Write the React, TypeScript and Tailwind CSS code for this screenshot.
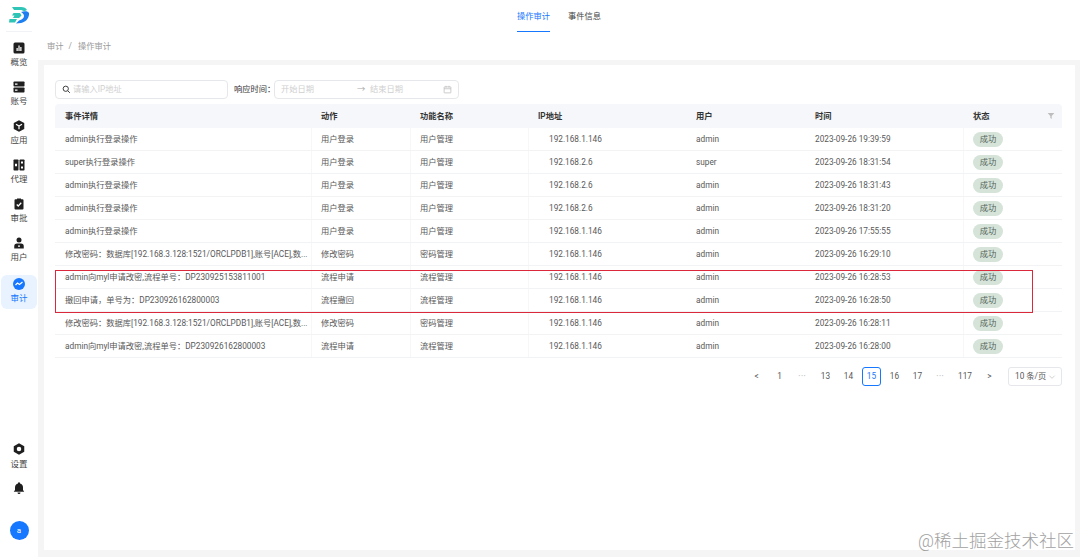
import React from 'react';

const font = { fontFamily: 'Roboto, "Noto Sans CJK SC", sans-serif' };

const logs = [
  ['admin执行登录操作', '用户登录', '用户管理', '192.168.1.146', 'admin', '2023-09-26 19:39:59'],
  ['super执行登录操作', '用户登录', '用户管理', '192.168.2.6', 'super', '2023-09-26 18:31:54'],
  ['admin执行登录操作', '用户登录', '用户管理', '192.168.2.6', 'admin', '2023-09-26 18:31:43'],
  ['admin执行登录操作', '用户登录', '用户管理', '192.168.2.6', 'admin', '2023-09-26 18:31:20'],
  ['admin执行登录操作', '用户登录', '用户管理', '192.168.1.146', 'admin', '2023-09-26 17:55:55'],
  ['修改密码：数据库[192.168.3.128:1521/ORCLPDB1],账号[ACE],数...', '修改密码', '密码管理', '192.168.1.146', 'admin', '2023-09-26 16:29:10'],
  ['admin向myl申请改密,流程单号：DP230925153811001', '流程申请', '流程管理', '192.168.1.146', 'admin', '2023-09-26 16:28:53'],
  ['撤回申请，单号为：DP230926162800003', '流程撤回', '流程管理', '192.168.1.146', 'admin', '2023-09-26 16:28:50'],
  ['修改密码：数据库[192.168.3.128:1521/ORCLPDB1],账号[ACE],数...', '修改密码', '密码管理', '192.168.1.146', 'admin', '2023-09-26 16:28:11'],
  ['admin向myl申请改密,流程单号：DP230926162800003', '流程申请', '流程管理', '192.168.1.146', 'admin', '2023-09-26 16:28:00'],
];

const navTop = [
  {
    label: '概览',
    icon: (
      <>
        <rect x="1" y="1" width="22" height="22" rx="3" />
        <path d="M7 12h2.500v6H7zM10.800 7h2.500v11h-2.500zM14.500 10H17v8h-2.500z" fill="#fff" />
      </>
    ),
  },
  {
    label: '账号',
    icon: (
      <>
        <rect x="1" y="1" width="22" height="10" rx="1.500" />
        <rect x="1" y="13" width="22" height="10" rx="1.500" />
        <path d="M4 5h5v2.500H4zM4 17h5v2.500H4z" fill="#fff" />
      </>
    ),
  },
  {
    label: '应用',
    icon: (
      <>
        <path d="M12 0.500l10.500 5.500v12L12 23.500 1.500 18V6z" />
        <path d="M6 8.500l6 3.500 6-3.500M12 12v6.500" fill="none" stroke="#fff" strokeWidth="2.500" />
      </>
    ),
  },
  {
    label: '代理',
    icon: (
      <>
        <rect x="1" y="1" width="10" height="22" rx="1.500" />
        <rect x="13" y="1" width="10" height="22" rx="1.500" />
        <path d="M4 9.500h4v5H4zM16 5h4v4h-4zM16 15h4v4h-4z" fill="#fff" />
      </>
    ),
  },
  {
    label: '审批',
    icon: (
      <>
        <path d="M5 2.500h3V1h8v1.500h3a2 2 0 012 2V21a2 2 0 01-2 2H5a2 2 0 01-2-2V4.500a2 2 0 012-2z" />
        <path d="M7.500 13l3 3 6-6.500" fill="none" stroke="#fff" strokeWidth="2.500" />
      </>
    ),
  },
  {
    label: '用户',
    icon: (
      <>
        <circle cx="12" cy="6" r="5" />
        <path d="M2.500 23v-4.500A5.500 5.500 0 018 13h8a5.500 5.500 0 015.500 5.500V23z" />
        <path d="M10 17h4v2.500h-4z" fill="#fff" />
      </>
    ),
  },
];

const columns = 'grid grid-cols-[256px_99px_118px_158px_119px_158px_99px]';

function NavIcon({ children }: { children: React.ReactNode }) {
  return (
    <svg viewBox="0 0 24 24" fill="#1f1f1f" className="w-[12px] h-[12px] shrink-0">
      {children}
    </svg>
  );
}

function Sidebar() {
  return (
    <aside className="w-[38px] shrink-0 bg-white flex flex-col items-center h-full">
      <div className="h-[32px] w-[26px] flex items-start justify-center border-b border-[#f0f2f5] pt-[6px]">
        <svg viewBox="0 0 20 18" className="w-[20px] h-[18px]">
          <path d="M3 1h9c3 0 5 1 6 3l-3 1.500C14 4.500 13 4 11 4H5z" fill="#2ec4b6" />
          <path d="M4.500 7H11l1.500 2.500L10 12H4l1.500-2.500H3z" fill="#2ec4b6" />
          <path d="M0.500 13H8l-2 3.500H0z" fill="#2ec4b6" />
          <path d="M12 6c4-1.500 7-1 8 1 .5 4-2.500 9-8 10l-5 .500 3-3c3-.500 5-2.500 5-4.500 0-2-1.500-3-3-4z" fill="#1e7ff0" />
        </svg>
      </div>
      <nav className="flex flex-col items-center mt-[10px] gap-[14px]">
        {navTop.map(item => (
          <div key={item.label} className="flex flex-col items-center h-[25px] gap-[3px]">
            <NavIcon>{item.icon}</NavIcon>
            <span className="text-[8.500px] leading-[10px] text-[#444]">{item.label}</span>
          </div>
        ))}
        <div className="mt-[-1px] w-[36px] h-[34px] pt-[3px] rounded-[6px] bg-[#e8f3ff] flex flex-col items-center gap-[3px]">
          <svg viewBox="0 0 24 24" className="w-[12px] h-[12px] shrink-0">
            <circle cx="12" cy="12" r="12" fill="#1677ff" />
            <path d="M5 14l4-4 4 3 6-5" fill="none" stroke="#fff" strokeWidth="2.500" />
          </svg>
          <span className="text-[8.500px] leading-[10px] text-[#1677ff]">审计</span>
        </div>
      </nav>
      <div className="mt-auto flex flex-col items-center pb-[17px]">
        <NavIcon>
          <path d="M12 0.500l10.500 5.800v11.400L12 23.500 1.500 17.700V6.300z" />
          <circle cx="12" cy="12" r="4.500" fill="#fff" />
        </NavIcon>
        <span className="text-[8.500px] leading-[10px] text-[#444] mt-[4px]">设置</span>
        <svg viewBox="0 0 24 24" fill="#1f1f1f" className="w-[12px] h-[12px] mt-[13px]">
          <path d="M12 0.500a2 2 0 012 2V3c4 1 6 4 6 8v5l2.500 3.500h-21L4 16v-5c0-4 2-7 6-8v-.500a2 2 0 012-2zM9 21h6a3 3 0 01-6 0z" />
        </svg>
        <div className="w-[19px] h-[19px] mt-[27px] rounded-full bg-[#1677ff] text-white text-[8px] flex items-center justify-center">
          a
        </div>
      </div>
    </aside>
  );
}

function Filters() {
  return (
    <div className="flex items-center h-[19px] text-[8.250px]">
      <div className="w-[173px] h-[19px] border border-[#e5e7eb] rounded-[4px] flex items-center pl-[6px] gap-[2px]">
        <svg viewBox="0 0 24 24" fill="none" stroke="#333" strokeWidth="2.500" className="w-[9px] h-[9px]">
          <circle cx="10" cy="10" r="7" />
          <path d="M15.500 15.500L21 21" />
        </svg>
        <span className="text-[#cfcfcf]">请输入IP地址</span>
      </div>
      <span className="ml-[6px] w-[40px] whitespace-nowrap text-[#333]">响应时间：</span>
      <div className="w-[185px] h-[19px] border border-[#e5e7eb] rounded-[4px] flex items-center pl-[6px] pr-[6px] text-[#cfcfcf]">
        <span className="w-[76px]">开始日期</span>
        <span className="w-[13px] text-[#aaa]">→</span>
        <span>结束日期</span>
        <svg viewBox="0 0 24 24" fill="none" stroke="#bbb" strokeWidth="2" className="w-[9px] h-[9px] ml-auto">
          <rect x="3" y="5" width="18" height="16" rx="1" />
          <path d="M3 10h18M8 2v5M16 2v5" />
        </svg>
      </div>
    </div>
  );
}

function LogTable() {
  const headers = ['事件详情', '动作', '功能名称', 'IP地址', '用户', '时间', '状态'];
  return (
    <div className="relative mt-[5px] text-[8.250px] text-[#595959]">
      <div className={`${columns} h-[24px] bg-[#f5f7fa] rounded-t-[4px] items-center font-semibold text-[#333]`}>
        {headers.map((h, i) => (
          <div key={h} className="pl-[10px] relative">
            {h}
            {i === 6 && (
              <svg viewBox="0 0 24 24" fill="#bdbdbd" className="absolute right-[7px] top-[2px] w-[8px] h-[8px]">
                <path d="M2 3h20l-8 9v9l-4-3v-6z" />
              </svg>
            )}
          </div>
        ))}
      </div>
      {logs.map(row => (
        <div key={row[5]} className={`${columns} h-[23px] items-center border-b border-[#f2f3f5]`}>
          <div className="pl-[10px] whitespace-nowrap overflow-hidden">{row[0]}</div>
          <div className="pl-[9px] h-full flex items-center border-l border-[#f7f7f7]">{row[1]}</div>
          <div className="pl-[9px] h-full flex items-center border-l border-[#f7f7f7]">{row[2]}</div>
          <div className="pl-[20px] h-full flex items-center border-l border-[#f7f7f7]">{row[3]}</div>
          <div className="pl-[10px] h-full flex items-center">{row[4]}</div>
          <div className="pl-[10px] h-full flex items-center">{row[5]}</div>
          <div className="pl-[9px] h-full flex items-center border-l border-[#f7f7f7]">
            <span className="w-[30px] h-[15px] rounded-full bg-[#d5e3d9] text-[#55655b] flex items-center justify-center">
              成功
            </span>
          </div>
        </div>
      ))}
      {/* 标注框 */}
      <div className="absolute left-0 top-[166px] w-[978px] h-[43px] border-[1.500px] border-[#d9293b] pointer-events-none" />
    </div>
  );
}

function Pagination() {
  const pages = ['<', '1', '•••', '13', '14', '15', '16', '17', '•••', '117', '>'];
  return (
    <div className="flex justify-end items-center mt-[9px] text-[8.250px] text-[#595959]">
      {pages.map((p, i) => (
        <span
          key={i}
          className={`${p === '117' ? 'w-[22px]' : 'w-[19px]'} h-[19px] mr-[4px] flex items-center justify-center rounded-[3px] ${
            p === '15' ? 'border border-[#1677ff] text-[#1677ff]' : ''
          } ${p === '•••' ? 'text-[#bbb] text-[5px] tracking-[1px]' : ''}`}
        >
          {p}
        </span>
      ))}
      <div className="ml-[5px] w-[54px] h-[19px] border border-[#e5e7eb] rounded-[3px] flex items-center justify-between pl-[6px] pr-[5px]">
        <span className="whitespace-nowrap">10 条/页</span>
        <svg viewBox="0 0 24 24" fill="none" stroke="#bbb" strokeWidth="2" className="w-[8px] h-[8px]">
          <path d="M4 8l8 8 8-8" />
        </svg>
      </div>
    </div>
  );
}

export default function App() {
  return (
    <div className="relative w-[1080px] h-[557px] flex bg-[#f5f5f5] overflow-hidden" style={font}>
      <Sidebar />
      <main className="flex-1 min-w-0 flex flex-col pl-[1px]">
        <div className="bg-white h-[60px] ml-[-1px]">
          <div className="h-[33px] flex justify-center">
            <div className="flex gap-[18px] text-[8.250px] h-[32px]">
              <span className="h-full pt-[10px] border-b-[1.500px] border-[#1677ff] text-[#1677ff] whitespace-nowrap">操作审计</span>
              <span className="pt-[10px] text-[#444]">事件信息</span>
            </div>
          </div>
          <div className="pl-[9px] mt-[8px] text-[8.250px] leading-[11px] text-[#999] flex">
            <span>审计</span>
            <span className="mx-[5px]">/</span>
            <span className="ml-[1px]">操作审计</span>
          </div>
        </div>
        <section className="ml-[5px] mt-[5px] mr-[5px] h-[485px] bg-white pt-[15px] pl-[11px] pr-[13px]">
          <Filters />
          <LogTable />
          <Pagination />
        </section>
      </main>
      <div className="absolute right-[6px] bottom-[6px] text-[17.500px] leading-[20px] text-[#8a8a8a] opacity-80 font-light">
        @稀土掘金技术社区
      </div>
    </div>
  );
}
